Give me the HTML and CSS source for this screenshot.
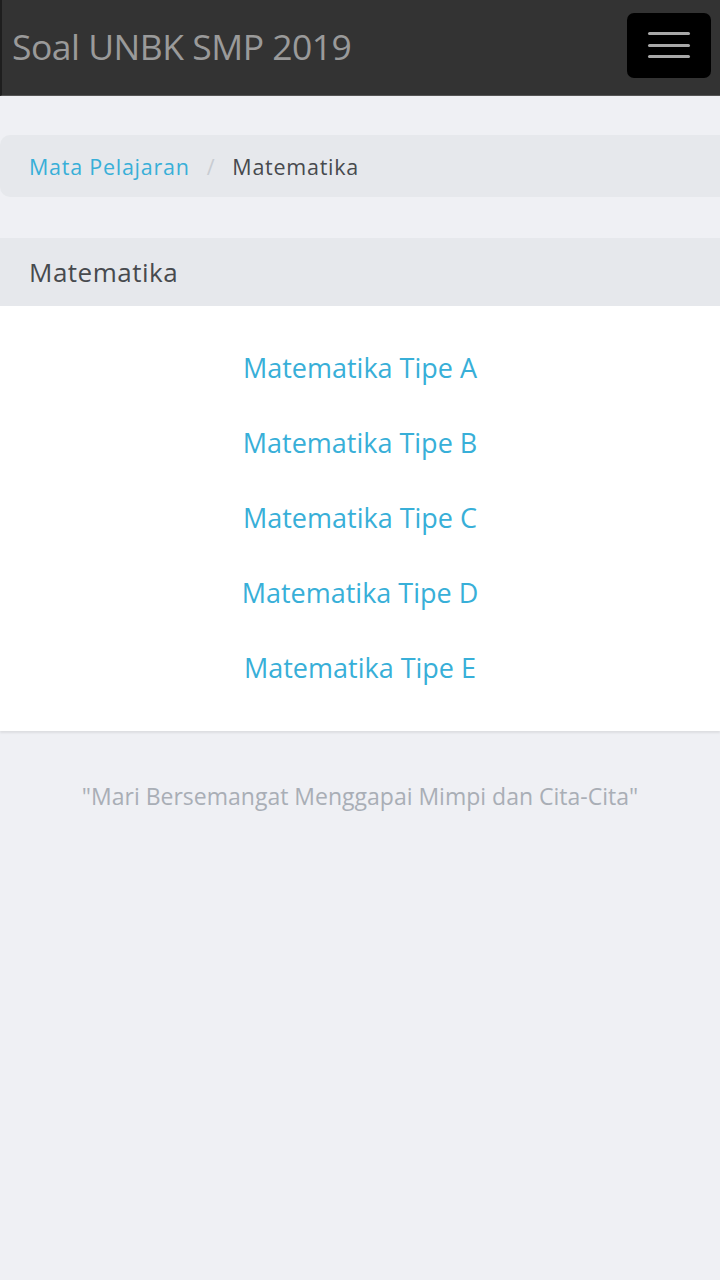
FILE: index.html
```html
<!DOCTYPE html>
<html lang="id">
<head>
  <meta charset="UTF-8">
  <title>Soal UNBK SMP 2019</title>
  <meta name="viewport" content="width=device-width, initial-scale=1.0">
  <link rel="stylesheet" href="styles.css">
</head>
<body>
  <div class="navbar">
    <div class="brand">Soal UNBK SMP 2019</div>
    <button class="toggler" aria-label="Menu">
      <span class="bar"></span>
      <span class="bar"></span>
      <span class="bar"></span>
    </button>
  </div>

  <div class="breadcrumb">
    <a href="#" class="crumb-link">Mata Pelajaran</a>
    <span class="crumb-sep">/</span>
    <span class="crumb-active">Matematika</span>
  </div>

  <div class="card">
    <div class="card-header">Matematika</div>
    <div class="card-body">
      <a href="#" class="tipe">Matematika Tipe A</a>
      <a href="#" class="tipe">Matematika Tipe B</a>
      <a href="#" class="tipe">Matematika Tipe C</a>
      <a href="#" class="tipe">Matematika Tipe D</a>
      <a href="#" class="tipe">Matematika Tipe E</a>
    </div>
  </div>

  <div class="quote">"Mari Bersemangat Menggapai Mimpi dan Cita-Cita"</div>
</body>
</html>
```

FILE: styles.css
```css
body {
  margin: 0;
  padding: 0;
  background: #eff0f4;
  font-family: "Open Sans", Arial, sans-serif;
  color: #444;
}
.navbar {
  height: 96px;
  background: #333333;
  border-left: 2px solid #1e1e1e;
  border-bottom: 1px solid #555;
  box-sizing: border-box;
  display: flex;
  align-items: center;
  justify-content: space-between;
  padding: 0 9px 0 10px;
}
.brand {
  font-size: 35.5px;
  color: #9a9a9a;
  letter-spacing: -0.5px;
  margin-top: -4px;
}
.toggler {
  width: 84px;
  height: 65px;
  background: #000;
  border: none;
  border-radius: 7px;
  display: flex;
  flex-direction: column;
  align-items: center;
  justify-content: center;
  gap: 8.5px;
  margin-top: -5px;
  padding: 0;
}
.bar {
  display: block;
  width: 42px;
  height: 3px;
  border-radius: 2px;
  background: #a8a8a8;
}
.breadcrumb {
  margin: 39px 0 41px 0;
  height: 62px;
  background: #e6e8ec;
  border-radius: 10px 0 0 10px;
  display: flex;
  align-items: center;
  padding: 0 29px;
  font-size: 21.5px;
  letter-spacing: 0.75px;
  gap: 17px;
}
.crumb-link {
  color: #38afd8;
  text-decoration: none;
}
.crumb-sep {
  color: #c8ccd2;
}
.crumb-active {
  color: #474a4e;
}
.card {
  background: #fff;
  box-shadow: 0 2px 2px rgba(0,0,0,0.08);
}
.card-header {
  height: 68px;
  background: #e6e8ec;
  display: flex;
  align-items: center;
  padding: 0 29px;
  font-size: 26px;
  letter-spacing: 0.5px;
  color: #474a4e;
}
.card-body {
  display: flex;
  flex-direction: column;
  align-items: center;
  padding: 42px 0 43px 0;
  gap: 35px;
}
.tipe {
  color: #38afd8;
  text-decoration: none;
  font-size: 27px;
  line-height: 40px;
}
.quote {
  text-align: center;
  margin-top: 49px;
  font-size: 23px;
  color: #a9aeb6;
}
```
